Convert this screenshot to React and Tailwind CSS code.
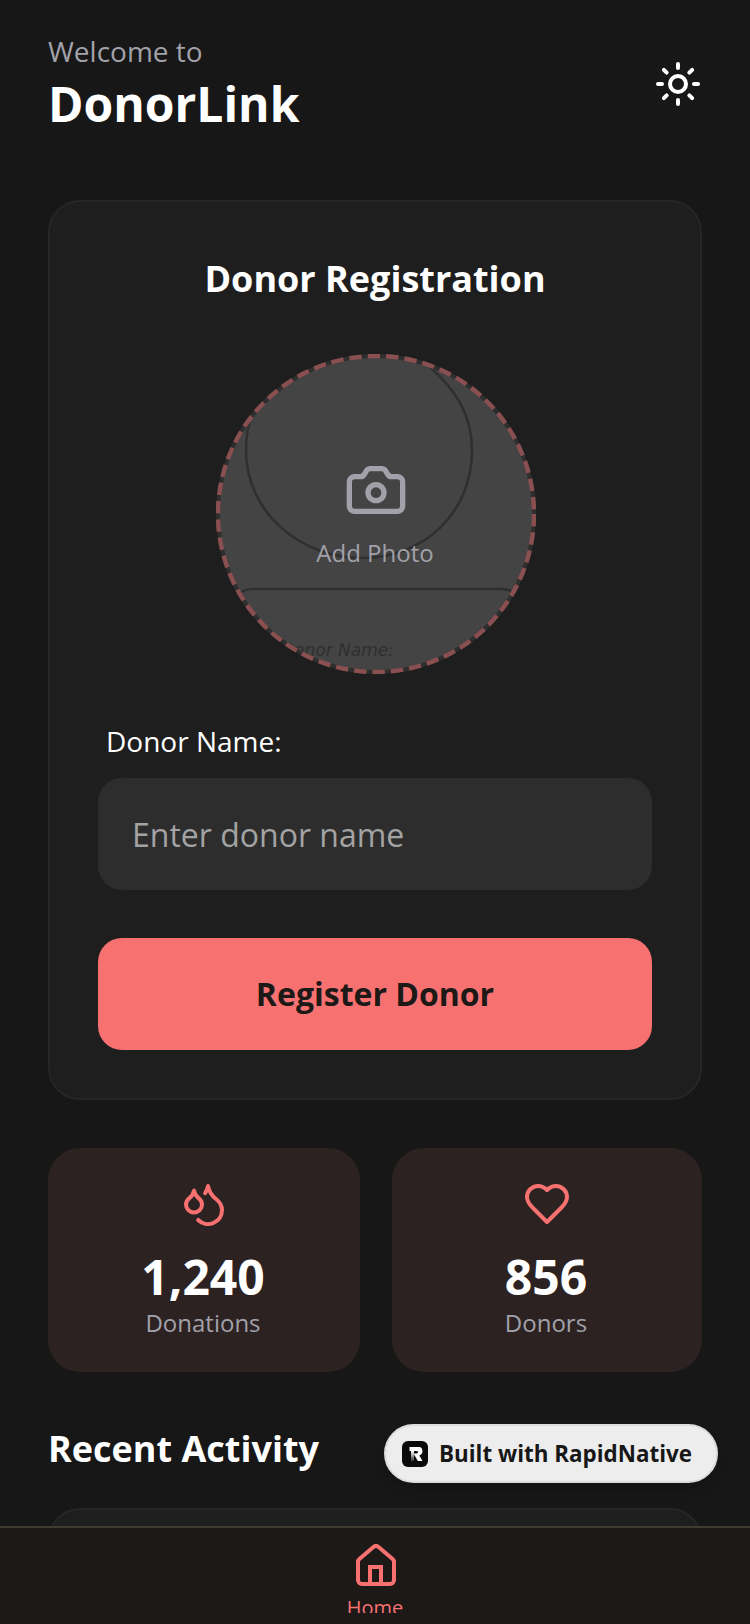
import React from 'react';
import { Sun, Camera, Droplets } from 'lucide-react';

function HeartIcon({ className, size }) {
  return (
    <svg className={className} width={size} height={size} viewBox="0 0 24 24" fill="none" stroke="currentColor" strokeWidth="2" strokeLinecap="round" strokeLinejoin="round">
      <path d="M19 14c1.49-1.46 3-3.21 3-5.5A5.5 5.5 0 0 0 16.5 3c-1.76 0-3 .5-4.5 2-1.5-1.5-2.74-2-4.5-2A5.5 5.5 0 0 0 2 8.5c0 2.3 1.5 4.05 3 5.5l7 7Z" />
    </svg>
  );
}

function HomeIcon({ className, size }) {
  return (
    <svg className={className} width={size} height={size} viewBox="0 0 24 24" fill="none" stroke="currentColor" strokeWidth="2" strokeLinecap="round" strokeLinejoin="round">
      <path d="M3 10a2 2 0 0 1 .709-1.528l7-6a2 2 0 0 1 2.582 0l7 6A2 2 0 0 1 21 10v9a2 2 0 0 1-2 2H5a2 2 0 0 1-2-2z" />
      <path d="M9 21v-8.500h5.500V21" strokeLinejoin="miter" />
    </svg>
  );
}

function PhotoPicker() {
  return (
    <div className="relative w-[320px] h-[320px] rounded-full bg-[#2f2f2f] p-[4px] self-center ml-[2px]">
      <div className="relative w-full h-full rounded-full bg-[#444444] overflow-hidden flex flex-col items-center">
        {/* faded sketch behind the picker */}
        <svg className="absolute inset-0" width="312" height="312" viewBox="0 0 312 312" fill="none">
          <path d="M196 -2C239 30 252 60 252 92C252 155 204 200 142 200C81 200 26 155 26 92C26 70 32 50 43 34" stroke="#2f2f2f" strokeWidth="2.5" />
          <path d="M19 237C21 233 25 231 33 231L281 231C289 231 293 233 297 237" stroke="#2f2f2f" strokeWidth="2.5" />
          <text x="61" y="298" fill="#2f2f2f" fontSize="17" fontStyle="italic" fontFamily="'DejaVu Sans', sans-serif">Donor Name:</text>
        </svg>
        <Camera className="relative shrink-0 mt-[100px] text-[#a1a1aa]" size={64} strokeWidth={2} />
        <span className="relative mt-[15px] mr-[2px] text-2xl leading-[32px] text-[#a1a1aa]">Add Photo</span>
      </div>
      {/* dashed ring */}
      <svg className="absolute inset-0" width="320" height="320" viewBox="0 0 320 320" fill="none">
        <circle cx="160" cy="160" r="158" stroke="#8a4f50" strokeWidth="4.5" strokeDasharray="12.4 6" />
      </svg>
    </div>
  );
}

function StatCard({ icon: Icon, value, label, className }) {
  return (
    <div className={`h-[224px] rounded-[32px] bg-[#2d2222] flex flex-col items-center pt-[32px] ${className}`}>
      <Icon className="shrink-0 text-[#f87171]" size={48} strokeWidth={2} />
      <span className="mt-[18px] mr-[2px] text-5xl leading-[61px] font-bold text-white">{value}</span>
      <span className="mr-[2px] text-2xl leading-[32px] text-[#a1a1aa]">{label}</span>
    </div>
  );
}

export default function App() {
  return (
    <div className="relative w-[750px] h-[1624px] overflow-hidden bg-[#171717] flex flex-col font-['Open_Sans',sans-serif]">
      <div className="flex-1 min-h-0 overflow-hidden px-[48px]">
        <div className="flex items-center justify-between pt-[31px]">
          <div>
            <p className="text-[28px] leading-[40px] text-[#a1a1aa]">Welcome to</p>
            <h1 className="mt-[1px] text-5xl leading-[64px] font-bold text-white">DonorLink</h1>
          </div>
          <Sun className="text-white" size={48} strokeWidth={2} />
        </div>

        <div className="mt-[64px] h-[900px] rounded-[32px] border-2 border-[#262626] bg-[#1e1e1e] px-[48px] pt-[49px] flex flex-col">
          <h2 className="text-4xl leading-[56px] font-bold text-white text-center">Donor Registration</h2>
          <div className="mt-[47px] flex flex-col">
            <PhotoPicker />
          </div>
          <label className="mt-[47px] ml-[8px] text-[28px] leading-[40px] text-white">Donor Name:</label>
          <input
            className="mt-[17px] h-[112px] rounded-[24px] bg-[#2d2d2d] px-[34px] text-[32px] text-white placeholder:text-[#a3a3a3] outline-none"
            placeholder="Enter donor name"
          />
          <button className="mt-[48px] h-[112px] rounded-[24px] bg-[#f87171] text-[32px] font-bold text-[#1c1917]">
            Register Donor
          </button>
        </div>

        <div className="mt-[48px] flex gap-[32px]">
          <StatCard icon={Droplets} value="1,240" label="Donations" className="w-[312px]" />
          <StatCard icon={HeartIcon} value="856" label="Donors" className="flex-1" />
        </div>

        <h2 className="mt-[49px] text-4xl leading-[56px] font-bold text-white">Recent Activity</h2>
        <div className="mt-[31px] h-[120px] rounded-[32px] border-2 border-[#262626] bg-[#1e1e1e]" />
      </div>

      <div className="h-[98px] shrink-0 border-t-2 border-[#3f3b33] bg-[#1c1917]">
        <div className="h-[85px] overflow-hidden flex flex-col items-center pt-[14px]">
          <HomeIcon className="shrink-0 text-[#f87171] ml-[1px]" size={48} />
          <span className="shrink-0 mt-[4px] text-[20px] leading-[28px] text-[#f87171]">Home</span>
        </div>
      </div>

      {/* floating badge */}
      <div className="absolute left-[384px] top-[1424px] w-[334px] h-[59px] rounded-full bg-[#ededed] border-2 border-[#dcdcdc] shadow-lg flex items-center pl-[16px] gap-[11px]">
        <svg width="26" height="26" viewBox="0 0 26 26">
          <defs>
            <linearGradient id="stem" x1="0" y1="0" x2="0" y2="1">
              <stop offset="0" stopColor="#ffffff" />
              <stop offset="1" stopColor="#333333" />
            </linearGradient>
          </defs>
          <rect width="26" height="26" rx="6" fill="#0a0a0a" />
          <path d="M7.500 6H17C19.500 6 20.500 8 20.500 10.300C20.500 12.600 19.300 14 17.300 14.400L20.500 20H15.800L11.500 12.400H15C16.300 12.400 16.300 10 15 10H7.500Z" fill="#ffffff" />
          <path d="M9 10H12V20H9Z" fill="url(#stem)" />
        </svg>
        <span className="text-[22.4px] leading-[32px] font-bold text-[#171717]">Built with RapidNative</span>
      </div>
    </div>
  );
}
